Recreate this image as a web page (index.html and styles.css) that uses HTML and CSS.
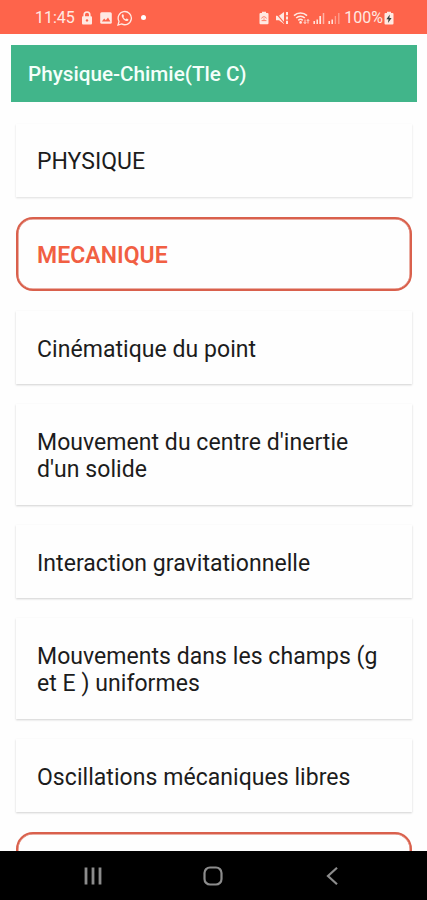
FILE: index.html
```html
<!DOCTYPE html>
<html lang="fr">
<head>
    <meta charset="UTF-8">
    <meta name="viewport" content="width=device-width, initial-scale=1.0">
    <title>Physique-Chimie(Tle C)</title>
    <link rel="stylesheet" href="styles.css">
</head>
<body>
    <div class="screen">
        <!-- Barre d'état -->
        <div class="status-bar">
            <div class="status-left">
                <span class="clock">11:45</span>
                <svg class="icon-lock" width="12" height="14" viewBox="0 0 12 14">
                    <path d="M3.2 6V3.8a2.8 2.8 0 0 1 5.6 0V6" fill="none" stroke="currentColor" stroke-width="1.6"/>
                    <rect x="1" y="5.3" width="10" height="8.2" rx="1" fill="currentColor"/>
                    <circle cx="6" cy="9.4" r="1.2" fill="#fe644b"/>
                </svg>
                <svg class="icon-image" width="12" height="12" viewBox="0 0 12 12">
                    <rect x="0.2" y="0.2" width="11.6" height="11.6" rx="1.5" fill="currentColor"/>
                    <path d="M1.8 9.4l2.4-3 1.6 1.9 2.2-2.9 2.4 4z" fill="#fe644b"/>
                </svg>
                <svg class="icon-whatsapp" width="16" height="16" viewBox="0 0 16 16">
                    <path d="M1 15l1-3.7a6.6 6.6 0 1 1 2.6 2.6z" fill="none" stroke="currentColor" stroke-width="1.3"/>
                    <path d="M5.2 4.6c-1.1 1.1-.3 3 1.2 4.6s3.5 2.4 4.7 1.3c.5-.5.5-1 .1-1.2l-1.4-.7c-.4-.1-.8.9-1.2.7-.9-.4-1.7-1.2-2.1-2.1-.2-.4.7-.8.5-1.2l-.7-1.4c-.2-.4-.7-.4-1.1 0z" fill="currentColor"/>
                </svg>
                <span class="dot"></span>
            </div>
            <div class="status-right">
                <svg class="icon-saver" width="10" height="14" viewBox="0 0 10 14">
                    <path d="M3 .8h4V2h1.5a1 1 0 0 1 1 1v9.2a1 1 0 0 1-1 1h-7a1 1 0 0 1-1-1V3a1 1 0 0 1 1-1H3z" fill="currentColor"/>
                    <path d="M2.6 7.5a2.5 2.5 0 0 1 4.8 0M2.6 9.6h4.8M5 7.4v1.4" fill="none" stroke="#fe644b" stroke-width="0.8"/>
                </svg>
                <svg class="icon-mute" width="15" height="14" viewBox="0 0 15 14">
                    <path d="M1 4.7h3L9 1v12L4 9.3H1z" fill="currentColor"/>
                    <path d="M.6 1.6l8.6 10.2" stroke="#fe644b" stroke-width="1.1"/>
                    <path d="M12 1v3.200M12 5.500v3M12 9.800V13" fill="none" stroke="currentColor" stroke-width="2"/>
                </svg>
                <svg class="icon-wifi" width="17" height="14" viewBox="0 0 17 14">
                    <path d="M1 4.6a9.3 9.3 0 0 1 13 0M3.2 7a6.2 6.2 0 0 1 8.6 0M5.3 9.3a3.2 3.2 0 0 1 4.4 0" fill="none" stroke="currentColor" stroke-width="1.6"/>
                    <circle cx="7.6" cy="11.4" r="1.3" fill="currentColor"/>
                    <path d="M12 8.5v4M10.8 11.2l1.2 1.4 1.2-1.4M15 12.5v-4M13.9 9.9L15 8.5l1.2 1.4" fill="none" stroke="currentColor" stroke-width="0.9"/>
                </svg>
                <svg class="icon-signal" width="12" height="12" viewBox="0 0 12 12">
                    <path d="M1.2 9V12M4.2 7.5V12" stroke="currentColor" stroke-width="1.5"/>
                    <path d="M7.2 4V12" stroke="currentColor" stroke-width="1.7"/>
                    <path d="M10.5 1V12" stroke="currentColor" stroke-width="1.5" opacity="0.6"/>
                </svg>
                <svg class="icon-signal" width="12" height="12" viewBox="0 0 12 12">
                    <path d="M1.2 9V12M4.2 7.5V12" stroke="currentColor" stroke-width="1.5"/>
                    <path d="M7.4 4V12M10.8 1V12" stroke="currentColor" stroke-width="1.3" opacity="0.45"/>
                </svg>
                <span class="percent">100%</span>
                <svg class="icon-battery" width="10" height="14" viewBox="0 0 10 14">
                    <path d="M3 .8h4V2h1.5a1 1 0 0 1 1 1v9.5a1 1 0 0 1-1 1h-7a1 1 0 0 1-1-1V3a1 1 0 0 1 1-1H3z" fill="currentColor"/>
                    <path d="M5.800 3.500L2.400 8.200h2.100l-.5 3.700 3.600-5H5.400z" fill="#35413f"/>
                </svg>
            </div>
        </div>

        <!-- Titre de la matière -->
        <header class="app-header">Physique-Chimie(Tle C)</header>

        <!-- Liste des chapitres -->
        <main class="chapter-list">
            <div class="chapter chapter-plain">PHYSIQUE</div>
            <div class="chapter chapter-section">MECANIQUE</div>
            <div class="chapter">Cinématique du point</div>
            <div class="chapter">Mouvement du centre d'inertie<br>d'un solide</div>
            <div class="chapter">Interaction gravitationnelle</div>
            <div class="chapter">Mouvements dans les champs (g<br>et E ) uniformes</div>
            <div class="chapter">Oscillations mécaniques libres</div>
            <div class="chapter chapter-section"></div>
        </main>

        <!-- Barre de navigation -->
        <nav class="nav-bar">
            <svg width="20" height="20" viewBox="0 0 20 20">
                <path d="M3 1.5v17M10 1.5v17M17 1.5v17" stroke="currentColor" stroke-width="2.8"/>
            </svg>
            <svg width="20" height="20" viewBox="0 0 20 20">
                <rect x="1.5" y="1.5" width="17" height="17" rx="5.5" fill="none" stroke="currentColor" stroke-width="2.2"/>
            </svg>
            <svg width="20" height="20" viewBox="0 0 20 20">
                <path d="M15 1.8L6 10l9 8.2" fill="none" stroke="currentColor" stroke-width="2.2"/>
            </svg>
        </nav>
    </div>
</body>
</html>
```
FILE: styles.css
```css
* {
    margin: 0;
    padding: 0;
    box-sizing: border-box;
}

body {
    font-family: Roboto, "Liberation Sans", sans-serif;
    background: #fefefe;
}

.screen {
    display: flex;
    flex-direction: column;
    width: 427px;
    height: 900px;
    overflow: hidden;
}

/* Barre d'état */
.status-bar {
    flex: none;
    display: flex;
    justify-content: space-between;
    align-items: center;
    height: 34px;
    padding: 1px 33px 0 35px;
    background: #fe644b;
    color: #ffe9e2;
    font-size: 16px;
}

.status-left,
.status-right {
    display: flex;
    align-items: center;
}

.clock {
    width: 46px;
}

.icon-image {
    margin-left: 7px;
}

.icon-whatsapp {
    margin-left: 5px;
}

.dot {
    width: 5px;
    height: 5px;
    margin-left: 8px;
    border-radius: 50%;
    background: #fff;
}

.icon-mute {
    margin-left: 6px;
}

.icon-wifi {
    margin-left: 3px;
}

.icon-signal {
    margin-left: 3px;
}

.percent {
    margin-left: 4px;
}

.icon-battery {
    margin-left: 1px;
}

/* Titre */
.app-header {
    flex: none;
    height: 57px;
    margin: 11px 10px 0 11px;
    padding-left: 17px;
    background: #41b58a;
    color: #f4fffa;
    font-size: 20.7px;
    font-weight: 500;
    line-height: 59px;
}

/* Chapitres */
.chapter-list {
    flex: 1;
    display: flex;
    flex-direction: column;
    gap: 20px;
    min-height: 0;
    padding: 21.5px 15px 0 16px;
    overflow: hidden;
}

.chapter {
    flex: none;
    min-height: 73.5px;
    padding: 25px 21px 21.5px;
    background: #fefefe;
    box-shadow: 0 1px 2px rgba(0, 0, 0, 0.18);
    color: #1c1c1c;
    font-size: 23px;
    line-height: 27px;
    letter-spacing: 0.05px;
    white-space: nowrap;
}

.chapter-plain {
    padding-top: 24px;
    box-shadow: 0 0.5px 2px rgba(0, 0, 0, 0.13);
    letter-spacing: 0;
}

.chapter-section {
    padding: 23px 19px 19px;
    border: 2px solid #d9604c;
    border-radius: 17px;
    box-shadow: inset 0 0 0 0.5px #d9604c;
    color: #f15f43;
    font-weight: 600;
}

/* Navigation */
.nav-bar {
    flex: none;
    display: flex;
    justify-content: space-between;
    align-items: center;
    height: 49px;
    padding: 1px 85px 0 83px;
    background: #000;
    color: #8c8c8c;
}
```
